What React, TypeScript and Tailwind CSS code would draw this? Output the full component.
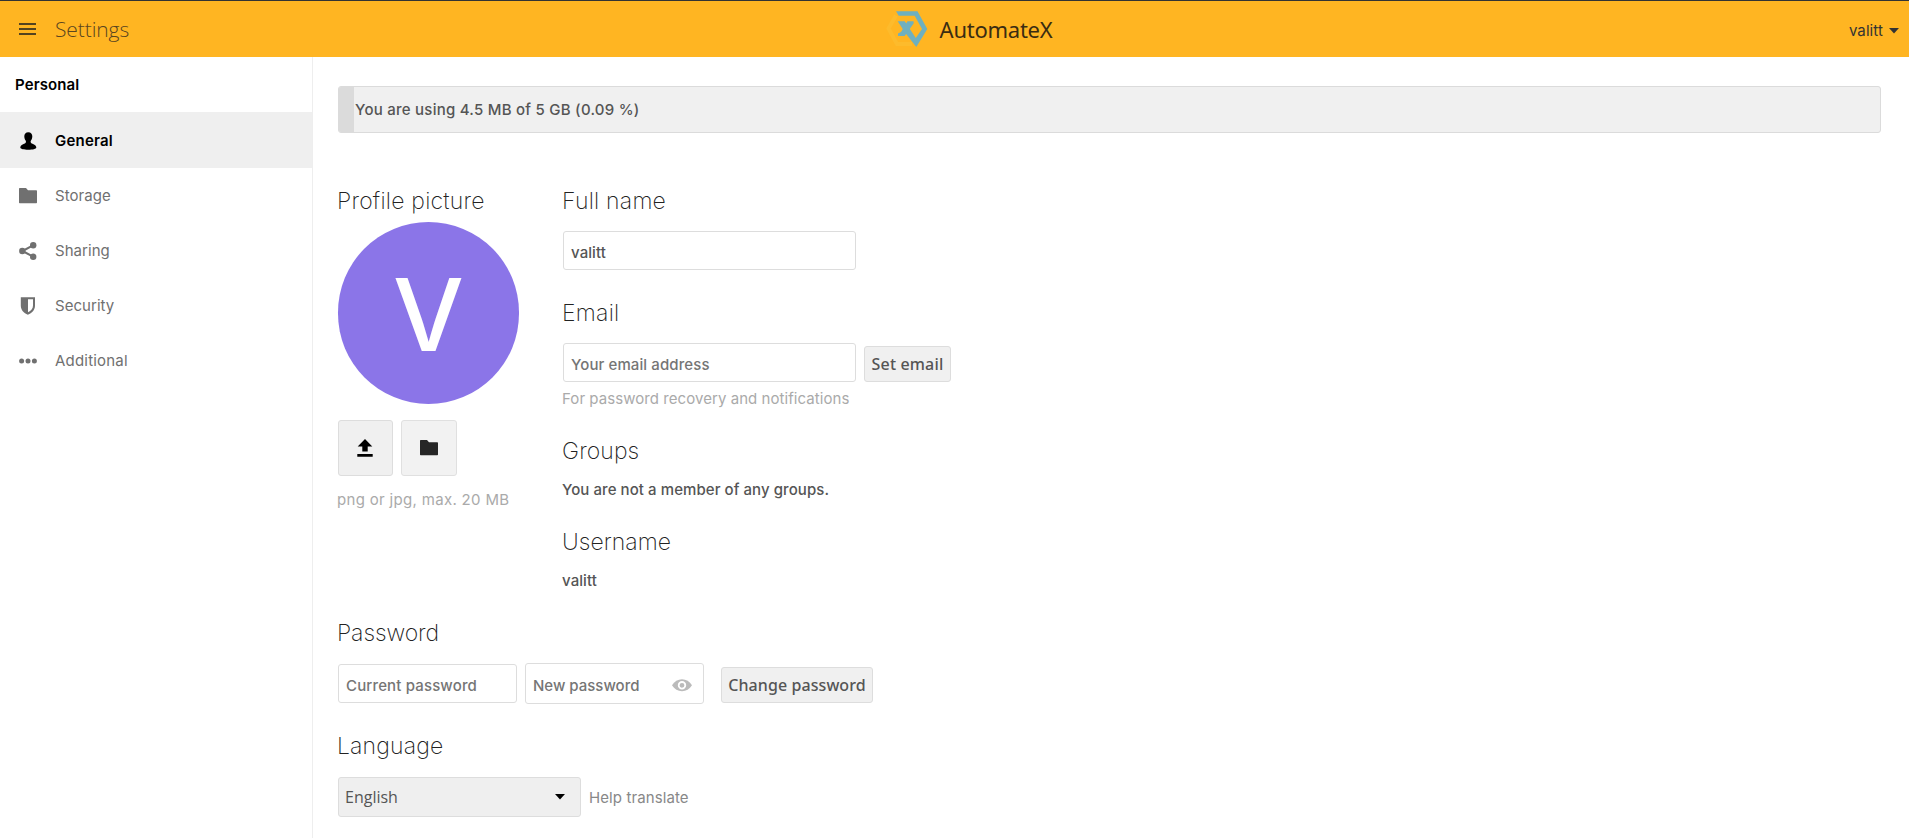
import React from 'react';

const UI = "font-['Inter','Liberation_Sans',sans-serif]";
const NOTO = "font-['Noto_Sans','Open_Sans',sans-serif]";
const OPEN = "font-['Open_Sans','Noto_Sans',sans-serif]";

function Logo() {
  return (
    <svg width="44" height="40" viewBox="0 0 44 40" className="shrink-0">
      <path d="M10 6.500L2.500 19.500L11 35H26" fill="none" stroke="#fdbb2c" strokeWidth="4" />
      <path
        fillRule="evenodd"
        d="M10 2.300H31.500L41.300 20L30.300 38L19 23.500L11.700 12.300H18.700L29.800 29L36 20L28.700 6.700H12.700Z"
        fill="#6fb0bf"
      />
      <path d="M21.500 12.300H27.600V14.500L18.600 27H12V24.500L15 23Z" fill="#6fb0bf" />
    </svg>
  );
}

function FolderIcon() {
  return (
    <svg width="18" height="16" viewBox="0 0 18 16" fill="currentColor">
      <path d="M.7 0H7l2 2.300h8.300a.7.7 0 0 1 .7.700v11.500a.7.7 0 0 1-.7.700H.7a.7.7 0 0 1-.7-.7V.7A.7.7 0 0 1 .7 0z" />
    </svg>
  );
}

function UserIcon() {
  return (
    <svg width="18" height="18" viewBox="0 0 18 18" fill="currentColor">
      <path d="M9.300.3C6.700.3 5.300 2 5.300 4.300c0 2 .6 3.300 1.300 4.200.5.700.4 1.500.2 2.100-.3.800-1.300 1.100-2.700 1.600C2 13 1.300 14.200 1.300 15.700c0 1 3.600 2 8 2s8-1 8-2c0-1.500-.7-2.700-2.800-3.500-1.400-.5-2.400-.8-2.700-1.600-.2-.6-.3-1.400.2-2.100.7-.9 1.300-2.200 1.300-4.200C13.300 2 11.900.3 9.300.3z" />
    </svg>
  );
}

function ShareIcon() {
  return (
    <svg width="18" height="18" viewBox="0 0 18 18" fill="currentColor">
      <path d="M14 3.400L3.500 9l10.500 5.600" fill="none" stroke="currentColor" strokeWidth="2.100" />
      <circle cx="14.200" cy="3.300" r="3.200" />
      <circle cx="3.300" cy="9" r="3.200" />
      <circle cx="14.200" cy="14.700" r="3.200" />
    </svg>
  );
}

function ShieldIcon() {
  return (
    <svg width="18" height="18" viewBox="0 0 18 18" fill="currentColor">
      <path fillRule="evenodd" d="M1.800.3H16v8.200c0 4.500-3 7.700-7.100 9.200-4.100-1.500-7.100-4.700-7.100-9.200zM9 2.300v13c3-1.300 5-3.700 5-6.800V2.300z" />
    </svg>
  );
}

function DotsIcon() {
  return (
    <svg width="18" height="18" viewBox="0 0 18 18" fill="currentColor">
      <circle cx="2.600" cy="9" r="2.500" />
      <circle cx="9" cy="9" r="2.500" />
      <circle cx="15.400" cy="9" r="2.500" />
    </svg>
  );
}

function UploadIcon() {
  return (
    <svg width="16" height="18" viewBox="0 0 16 18" fill="currentColor">
      <path d="M8 0l7.300 7.500H10.700V12.500H5.300V7.500H.7zM.3 15H15.700v2.700H.3z" />
    </svg>
  );
}

function EyeIcon() {
  return (
    <svg width="20" height="13" viewBox="0 0 20 13">
      <path d="M0 6.300C2.300 2.300 6 .3 10 .3s7.700 2 10 6c-2.300 3.900-6 6-10 6s-7.700-2.100-10-6z" fill="#bbb" />
      <circle cx="10" cy="6.300" r="3.300" fill="none" stroke="#fff" strokeWidth="1.800" />
    </svg>
  );
}

function Caret({ className }: { className?: string }) {
  return (
    <svg width="10" height="6" viewBox="0 0 10 6" fill="currentColor" className={className}>
      <path d="M0 0h10L5 5.500z" />
    </svg>
  );
}

function Heading({ children, className = '' }: { children: React.ReactNode; className?: string }) {
  return <h2 className={`-ml-px h-8 whitespace-nowrap text-[23px] leading-8 font-extralight text-[#222] ${className}`}>{children}</h2>;
}

const nav = [
  { label: 'Storage', icon: <FolderIcon />, track: 'tracking-[0.05px]' },
  { label: 'Sharing', icon: <ShareIcon />, track: 'tracking-[0.05px]' },
  { label: 'Security', icon: <ShieldIcon />, track: 'tracking-[0.05px]' },
  { label: 'Additional', icon: <DotsIcon />, track: 'tracking-[0.2px]' },
];

export default function App() {
  return (
    <div className={`flex h-[838px] w-full flex-col overflow-hidden bg-white text-[15px] leading-5 text-[#555] ${UI}`}>
      <header className="grid h-[57px] shrink-0 grid-cols-[1fr_auto_1fr] items-center border-t border-[#333] bg-[#ffb522]">
        <div className="flex items-center pl-[19px] text-[#5a4520]">
          <div className="flex w-[17px] flex-col gap-[3px]">
            <i className="h-[2px] bg-[#54431f]" />
            <i className="h-[2px] bg-[#54431f]" />
            <i className="h-[2px] bg-[#54431f]" />
          </div>
          <span className={`ml-[19px] text-[21px] font-light tracking-[-0.1px] leading-7 ${OPEN}`}>Settings</span>
        </div>
        <div className="flex items-center gap-2.5 pl-[29px]">
          <Logo />
          <span className={`text-[22px] leading-8 tracking-[-0.25px] text-[#3a2c12] ${NOTO}`}>AutomateX</span>
        </div>
        <div className="flex items-center justify-end pr-2.5 pt-1 text-[#333]">
          <span className="tracking-[0.1px]">valitt</span>
          <Caret className="ml-1.5" />
        </div>
      </header>

      <div className="flex min-h-0 flex-1">
        <nav className="flex w-[313px] shrink-0 flex-col border-r border-[#eee]">
          <div className="flex h-[55px] items-center pl-[15px] font-semibold tracking-[0.1px] text-black">Personal</div>
          <div className="flex h-14 items-center gap-[18px] bg-[#efefef] pl-[19px] pt-px font-semibold tracking-[0.2px] text-black">
            <UserIcon />
            General
          </div>
          {nav.map((n) => (
            <div key={n.label} className={`flex h-[55px] items-center gap-[18px] pl-[19px] text-[#707070] ${n.track}`}>
              {n.icon}
              {n.label}
            </div>
          ))}
        </nav>

        <main className="flex flex-1 flex-col pl-[25px] pr-7 pt-[29px]">
          <div className="flex h-[47px] items-center overflow-hidden rounded-[3px] border border-[#dbdbdb] bg-[#f0f0f0]">
            <div className="h-full w-[15px] bg-[#dbdbdb]" />
            <span className="ml-px font-medium tracking-[0.25px] text-[#555]">You are using 4.5 MB of 5 GB (0.09 %)</span>
          </div>

          <div className="mt-[52px] flex">
            <section className="w-[225px] shrink-0">
              <Heading className="tracking-[0.22px]">Profile picture</Heading>
              <div className="mt-[5px] flex h-[182px] w-[181px] items-center justify-center rounded-full bg-[#8b75e8] pt-1">
                <span className="text-[100px] leading-none font-medium text-white">V</span>
              </div>
              <div className="mt-4 flex gap-2">
                <button className="flex h-14 w-[55px] items-center justify-center rounded-[3px] border border-[#ddd] bg-[#f0f0f0] pr-px text-black">
                  <UploadIcon />
                </button>
                <button className="flex h-14 w-14 items-center justify-center rounded-[3px] border border-[#e0e0e0] bg-[#f2f2f2] text-[#262626]">
                  <FolderIcon />
                </button>
              </div>
              <p className="-ml-px mt-3.5 whitespace-nowrap tracking-[0.32px] text-[#aaa]">png or jpg, max. 20 MB</p>
            </section>

            <section>
              <Heading className="tracking-[0.22px]">Full name</Heading>
              <div className="mt-3.5 flex h-[39px] w-[293px] items-center rounded-[3px] border border-[#ddd] pl-[7px] pt-1 font-medium tracking-[0.1px] text-[#555]">valitt</div>
              <Heading className="mt-[27px] tracking-[0.25px]">Email</Heading>
              <div className="mt-3.5 flex items-end gap-2">
                <div className="flex h-[39px] w-[293px] items-center rounded-[3px] border border-[#ddd] pl-[7px] pt-1 font-medium tracking-[0.1px] text-[#757575]">Your email address</div>
                <button className={`h-9 w-[87px] whitespace-nowrap rounded-[3px] border border-[#ddd] bg-[#f0f0f0] text-[16px] font-medium tracking-[0.15px] text-[#555] ${NOTO}`}>Set email</button>
              </div>
              <p className="-ml-px mt-[7px] whitespace-nowrap tracking-[0.06px] text-[#aaa]">For password recovery and notifications</p>
              <Heading className="mt-[26px] tracking-[0.1px]">Groups</Heading>
              <p className="mt-[13px] -ml-px whitespace-nowrap font-medium tracking-[0.07px]">You are not a member of any groups.</p>
              <Heading className="mt-[26px] tracking-[0.05px]">Username</Heading>
              <p className="mt-[13px] -ml-px font-medium tracking-[0.1px]">valitt</p>
            </section>
          </div>

          <Heading className="mt-[26px] tracking-[-0.08px]">Password</Heading>
          <div className="mt-3.5 flex h-[41px] items-center">
            <div className="flex h-[39px] w-[179px] items-center rounded-[3px] border border-[#ddd] pl-[7px] pt-1 font-medium tracking-[0.15px] text-[#757575]">Current password</div>
            <div className="ml-2 flex h-[41px] w-[179px] items-center justify-between rounded-[3px] border border-[#ddd] pl-[7px] pr-[11px] pt-1 font-medium text-[#757575]">
              New password
              <EyeIcon />
            </div>
            <button className={`mt-[3px] ml-[17px] h-9 w-[152px] whitespace-nowrap rounded-[3px] border border-[#ddd] bg-[#f0f0f0] pb-px text-[16px] font-medium tracking-[0.08px] text-[#555] ${NOTO}`}>Change password</button>
          </div>

          <Heading className="mt-[26px] tracking-[0.15px]">Language</Heading>
          <div className="mt-[15px] flex items-center">
            <div className={`flex h-10 w-[243px] items-center justify-between rounded-[3px] border border-[#ddd] bg-[#efefef] pl-1.5 pr-[15px] text-[16px] text-[#555] ${OPEN}`}>
              English
              <Caret className="text-black" />
            </div>
            <a className="ml-[8px] pt-0.5 whitespace-nowrap tracking-[0.1px] text-[#888]">Help translate</a>
          </div>
        </main>
      </div>
    </div>
  );
}
